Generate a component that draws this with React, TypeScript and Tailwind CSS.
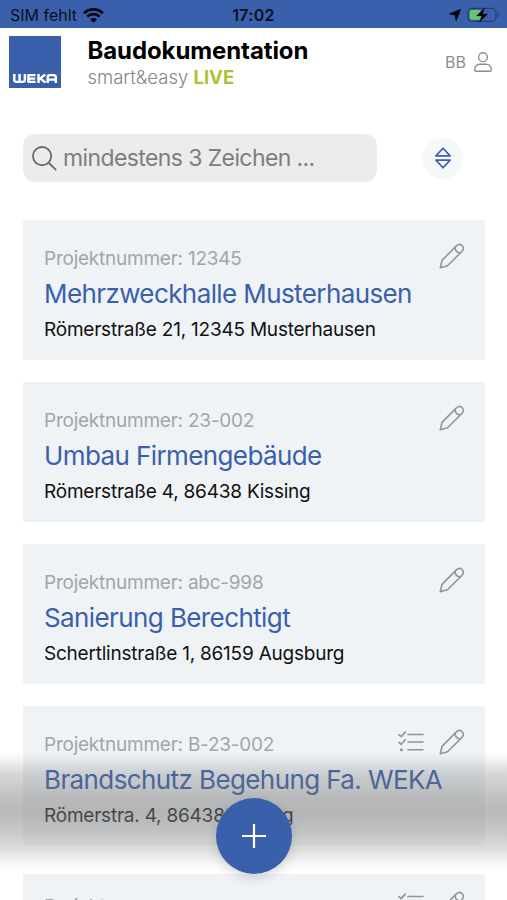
type Project = { number: string; title: string; address: string; checklist?: boolean };

const projects: Project[] = [
  { number: "12345", title: "Mehrzweckhalle Musterhausen", address: "Römerstraße 21, 12345 Musterhausen" },
  { number: "23-002", title: "Umbau Firmengebäude", address: "Römerstraße 4, 86438 Kissing" },
  { number: "abc-998", title: "Sanierung Berechtigt", address: "Schertlinstraße 1, 86159 Augsburg" },
  { number: "B-23-002", title: "Brandschutz Begehung Fa. WEKA", address: "Römerstra. 4, 86438 Kissing", checklist: true },
  { number: "", title: "", address: "", checklist: true },
];

function Pencil() {
  return (
    <svg className="h-[26px] w-[26px]" viewBox="0 0 26 26" fill="none" stroke="#929496" strokeWidth="1.6" strokeLinejoin="round" strokeLinecap="round">
      <path d="M1.3 24.8 3 17.4 17.4 2.9c1.6-1.8 3.9-2 5.6-.4s1.600 4 .1 5.700L8.500 22.800Z" />
      <path d="M16.200 4.500c-.2 3.200 1.800 5.400 5.100 5.400" />
    </svg>
  );
}

function Checklist() {
  return (
    <svg className="h-[22px] w-[26px]" viewBox="0 0 26 22" fill="none" stroke="#929496" strokeWidth="1.6" strokeLinejoin="round" strokeLinecap="round">
      <path d="m1 3.600 2.200 2 4-4.500M1 11.300l2.200 2 4-4.500M10 3.500h15M10 11h15M10 18.800h15" />
      <circle cx="3.400" cy="18.800" r="1.500" fill="#929496" stroke="none" />
    </svg>
  );
}

function StatusBar() {
  return (
    <div className="grid h-7 grid-cols-3 items-center bg-[#3a60ac] text-[16px] leading-7 text-[#0b1020]">
      <div className="flex items-center gap-[6px] pl-[10px] pt-px">
        <span>SIM fehlt</span>
        <svg className="h-[15px] w-[21px]" viewBox="0 0 21 15" fill="none" stroke="#05070d" strokeWidth="2.7">
          <path d="M1.100 5.200c5.400-5 13.400-5 18.800 0M4.300 8.600c3.600-3.300 8.800-3.300 12.400 0" />
          <path d="m10.500 14.700-3.400-3.500c2-1.600 4.800-1.600 6.800 0Z" fill="#05070d" stroke="none" />
        </svg>
      </div>
      <div className="pt-px text-center font-semibold tracking-[0.3px]">17:02</div>
      <div className="flex items-center justify-end gap-[6px] pr-[7px] pt-px">
        <svg className="h-3 w-3" viewBox="0 0 12 12" fill="#05070d">
          <path d="M11.600.4 7.200 11.600 6 6 .3 4.900Z" stroke="#05070d" strokeWidth=".8" strokeLinejoin="round" />
        </svg>
        <svg className="h-[16px] w-[33px]" viewBox="0 0 33 16">
          <rect x="1" y="1.400" width="28" height="13" rx="4" fill="none" stroke="#263f73" strokeWidth="1.200" />
          <path d="M30.600 5.400c2 .9 2 4.300 0 5.200Z" fill="#263f73" />
          <rect x="2.600" y="3" width="12" height="9.800" rx="2.200" fill="#68c574" />
          <path d="M17.600.8 9.400 9h5.200l-2.200 6.200L20.600 7h-5.200Z" fill="#05070d" stroke="#05070d" strokeWidth=".3" />
        </svg>
      </div>
    </div>
  );
}

function Header() {
  return (
    <header className="flex h-[106px] items-start pl-[9px] pr-[15px] pt-2">
      <div className="flex h-[52px] w-[52px] items-end justify-center bg-[#3a60ac] pb-[5px]">
        <svg className="h-[9px] w-[44px]" viewBox="0 0 44 10" preserveAspectRatio="none" fill="none" stroke="#fff" strokeWidth="2.500" strokeLinejoin="round">
          <path d="M1.300 0v6.500Q1.300 8.800 3.500 8.800h6q2.400 0 2.400-2.300V0M6.600 0v8.800" />
          <path d="M22.500 1.200h-7v7.600h7M15.500 5h6.700" />
          <path d="M25.500 0v10M32.200.4 27.300 5l5.200 4.600M25.500 5h2" />
          <path d="M34.700 10V3.500q0-2.300 2.400-2.300h3.300q2.400 0 2.400 2.300V10M34.700 6.300h8.100" />
        </svg>
      </div>
      <div className="ml-[26.5px] flex flex-1 flex-col pt-px">
        <h1 className="text-[24px] font-bold leading-7 tracking-[-0.1px] text-black">Baudokumentation</h1>
        <p className="-mt-px text-[18.5px] leading-[27px] text-[#858585]">
          <span className="font-light">smart&amp;easy</span>{" "}
          <span className="font-bold text-[#a9c23a]">LIVE</span>
        </p>
      </div>
      <div className="mt-[14px] flex items-center gap-[8px] text-[16px] leading-6 text-[#8d8d8d]">
        <span>BB</span>
        <svg className="h-5 w-[18px]" viewBox="0 0 18 20" fill="none" stroke="#8d8d8d" strokeWidth="1.400" strokeLinejoin="round">
          <circle cx="9" cy="5.200" r="4.400" />
          <path d="M2 19.200q-1.300 0-1.300-1.500c0-3.600 2.500-5.500 5.300-5.500h6c2.800 0 5.300 1.900 5.300 5.500q0 1.500-1.300 1.500Z" />
        </svg>
      </div>
    </header>
  );
}

function SearchRow() {
  return (
    <div className="flex items-center justify-between pl-[23px] pr-[44px]">
      <div className="flex h-12 w-[354px] items-center gap-[6px] rounded-[12px] bg-[#ececec] pl-[9px]">
        <svg className="h-[25px] w-[25px]" viewBox="0 0 26 26" fill="none" stroke="#6b6b6b" strokeWidth="1.900" strokeLinecap="round">
          <circle cx="10.500" cy="10.500" r="9.500" />
          <path d="m17.400 17.400 7.200 7.200" />
        </svg>
        <span className="whitespace-nowrap text-[23px] tracking-[-0.6px] text-[#7d7d7d]">mindestens 3 Zeichen ...</span>
      </div>
      <button className="flex h-[41px] w-[41px] items-center justify-center rounded-full bg-[#f6f7f8]">
        <svg className="h-[22px] w-4" viewBox="0 0 16 22" fill="none" stroke="#3a60ac" strokeWidth="1.600" strokeLinejoin="round">
          <path d="M8 1.200 15.100 8.900H.9ZM8 20.800.9 13.100h14.200Z" />
        </svg>
      </button>
    </div>
  );
}

function Card({ project }: { project: Project }) {
  return (
    <article className="flex h-[140px] shrink-0 justify-between bg-[#eff3f6] pl-[21px] pr-5 pt-6">
      <div className="whitespace-nowrap">
        <p className="text-[19px] leading-[30px] tracking-[-0.24px] text-[#a3a5a7]">Projektnummer: {project.number}</p>
        <h2 className="text-[26px] leading-[40px] tracking-[-0.6px] text-[#3a60ac]">{project.title}</h2>
        <p className="text-[19px] leading-[32px] tracking-[-0.22px] text-[#111]">{project.address}</p>
      </div>
      <div className="-ml-28 -mt-px flex h-[26px] items-center gap-[15px]">
        {project.checklist && <Checklist />}
        <Pencil />
      </div>
    </article>
  );
}

export default function App() {
  return (
    <div className="relative h-[900px] w-[507px] overflow-hidden bg-white font-['Inter','Liberation_Sans',sans-serif]">
      <StatusBar />
      <Header />
      <SearchRow />
      <main className="mt-[38px] flex flex-col gap-[22px] pl-[23px] pr-[22px]">
        {projects.map((p, i) => (
          <Card key={i} project={p} />
        ))}
      </main>
      <div className="pointer-events-none absolute inset-x-0 top-[752px] h-[122px] bg-[linear-gradient(to_bottom,rgba(100,100,100,0)_0%,rgba(105,105,105,0.08)_6%,rgba(110,110,110,0.28)_18%,rgba(115,115,115,0.45)_38%,rgba(118,118,118,0.5)_50%,rgba(145,145,145,0.5)_65%,rgba(200,200,200,0.6)_80%,rgba(248,248,248,0.85)_92%,rgba(255,255,255,1)_98%)]" />
      <button className="absolute left-[216px] top-[798px] flex h-[76px] w-[76px] items-center justify-center rounded-full bg-[#3a60ac] shadow-[0_4px_12px_rgba(0,0,0,0.16)]">
        <svg className="h-6 w-6" viewBox="0 0 24 24" stroke="#fff" strokeWidth="2.200">
          <path d="M12 0v24M0 12h24" />
        </svg>
      </button>
    </div>
  );
}
